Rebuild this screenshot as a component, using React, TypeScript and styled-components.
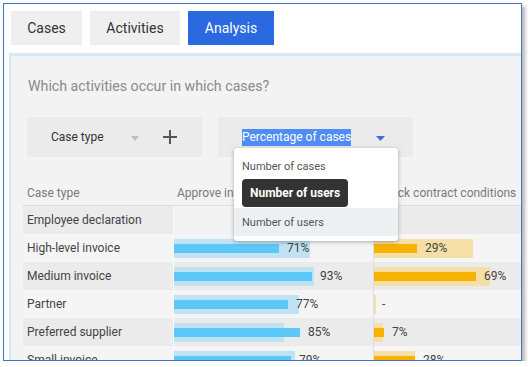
import styled, { createGlobalStyle } from "styled-components";

const GlobalStyle = createGlobalStyle`
  body {
    margin: 0;
    background: #ffffff;
    font-family: Roboto, "Liberation Sans", Arial, sans-serif;
  }
`;

type Measure = { value: number; ref: number; label?: string };
type Row = { name: string; approve?: Measure; check?: Measure };

const SCALE = 1.48;

const rows: Row[] = [
  { name: "Employee declaration" },
  { name: "High-level invoice", approve: { value: 71, ref: 136 }, check: { value: 29, ref: 99 } },
  { name: "Medium invoice", approve: { value: 93, ref: 140 }, check: { value: 69, ref: 116 } },
  { name: "Partner", approve: { value: 77, ref: 125 }, check: { value: 0, ref: 2, label: "-" } },
  { name: "Preferred supplier", approve: { value: 85, ref: 110 }, check: { value: 7, ref: 9 } },
  { name: "Small invoice", approve: { value: 79, ref: 121 }, check: { value: 28, ref: 41 } },
];

const tabs = [
  { label: "Cases", width: 71 },
  { label: "Activities", width: 90 },
  { label: "Analysis", width: 86 },
];

const Caret = ({ color, width = 9 }: { color: string; width?: number }) => (
  <svg width={width} height="5" viewBox={`0 0 ${width} 5`}>
    <path d={`M0 0 L${width} 0 L${width / 2} 5 Z`} fill={color} />
  </svg>
);

const PlusIcon = () => (
  <svg width="14" height="14" viewBox="0 0 14 14">
    <path d="M7 0 V14 M0 7 H14" stroke="#555" strokeWidth="2" />
  </svg>
);

const BarCell = ({ m, tone, empty }: { m?: Measure; tone: "blue" | "orange"; empty?: boolean }) => (
  <Cell $divider={tone === "blue" ? "#fafafa" : "#e0e0e0"} $light={empty}>
    {m && (
      <Stack>
        <RefBar $tone={tone} style={{ width: m.ref }} />
        <Fill>
          <ValueBar $tone={tone} style={{ width: Math.round(m.value * SCALE) }} />
          <Value>{m.label ?? `${m.value}%`}</Value>
        </Fill>
      </Stack>
    )}
  </Cell>
);

export default function App() {
  return (
    <>
      <GlobalStyle />
      <Frame>
        <TabBar>
          {tabs.map((t) => (
            <Tab key={t.label} $width={t.width} $active={t.label === "Analysis"}>
              {t.label}
            </Tab>
          ))}
        </TabBar>
        <Panel>
          <Question>Which activities occur in which cases?</Question>
          <Controls>
            <Control $width={175}>
              <ControlLabel>Case type</ControlLabel>
              <CaretSlot>
                <Caret color="#bdbdbd" width={8} />
              </CaretSlot>
              <PlusIcon />
            </Control>
            <Control $width={195}>
              <Selected>Percentage of cases</Selected>
              <CaretSlot $gap={25}>
                <Caret color="#3d6fd6" />
              </CaretSlot>
              <Menu>
                <MenuItem>Number of cases</MenuItem>
                <MenuItem>Percentage of cases</MenuItem>
                <MenuItem $hover>Number of users</MenuItem>
                <Tooltip>Number of users</Tooltip>
              </Menu>
            </Control>
          </Controls>
          <Table>
            <HeadCell>Case type</HeadCell>
            <HeadCell>Approve invoice</HeadCell>
            <HeadCell>Check contract conditions</HeadCell>
            {rows.map((r, i) => (
              <TableRow key={r.name} $dark={i % 2 === 0}>
                <NameCell>{r.name}</NameCell>
                <BarCell m={r.approve} tone="blue" empty={!r.approve} />
                <BarCell m={r.check} tone="orange" />
              </TableRow>
            ))}
          </Table>
        </Panel>
      </Frame>
    </>
  );
}

const Frame = styled.div`
  box-sizing: border-box;
  margin: 3px 0 0 3px;
  width: 519px;
  height: 358px;
  border: 1px solid #4472c4;
  background: #ffffff;
  overflow: hidden;
  box-shadow: 3px 3px 4px rgba(0, 0, 0, 0.3);
  display: flex;
  flex-direction: column;
`;

const TabBar = styled.div`
  display: flex;
  gap: 8px;
  padding: 7px 0 0 7px;
`;

const Tab = styled.div<{ $active?: boolean; $width: number }>`
  width: ${(p) => p.$width}px;
  height: 34px;
  display: flex;
  align-items: center;
  justify-content: center;
  font-size: 14px;
  color: ${(p) => (p.$active ? "#ffffff" : "#333333")};
  background: ${(p) => (p.$active ? "#2a69e0" : "#efefef")};
`;

const Panel = styled.div`
  flex: 1;
  margin: 8px 0 0 5px;
  background: #f3f3f3;
  border-top: 3px solid #d3e8f8;
  border-left: 2px solid #d3e8f8;
`;

const Question = styled.div`
  padding: 20px 0 0 17px;
  font-size: 14.2px;
  line-height: 20px;
  color: #8a8a8a;
`;

const Controls = styled.div`
  display: flex;
  gap: 16px;
  margin: 21px 0 0 16px;
`;

const Control = styled.div<{ $width: number }>`
  position: relative;
  box-sizing: border-box;
  width: ${(p) => p.$width}px;
  height: 40px;
  padding-left: 24px;
  display: flex;
  align-items: center;
  background: #ebebeb;
  border-radius: 2px;
  font-size: 12px;
`;

const ControlLabel = styled.span`
  color: #333333;
`;

const CaretSlot = styled.span<{ $gap?: number }>`
  display: flex;
  margin: 2px ${(p) => (p.$gap ? 0 : 24)}px 0 ${(p) => p.$gap ?? 27}px;
`;

const Selected = styled.span`
  background: #4f8cf6;
  color: #ffffff;
  font-size: 12px;
  line-height: 17px;
`;

const Menu = styled.div`
  position: absolute;
  left: 16px;
  top: 31px;
  width: 164px;
  padding: 4px 0 5px;
  background: #ffffff;
  border-radius: 3px;
  box-shadow: 0 1px 4px rgba(0, 0, 0, 0.3);
  z-index: 2;
`;

const MenuItem = styled.div<{ $hover?: boolean }>`
  height: 28px;
  padding-left: 8px;
  display: flex;
  align-items: center;
  font-size: 11px;
  color: #555555;
  background: ${(p) => (p.$hover ? "#edf0f3" : "transparent")};
`;

const Tooltip = styled.div`
  position: absolute;
  left: 8px;
  top: 31px;
  height: 28px;
  padding: 0 8px;
  display: flex;
  align-items: center;
  background: #333333;
  border-radius: 4px;
  color: #ffffff;
  font-size: 12px;
  font-weight: bold;
`;

const Table = styled.div`
  display: grid;
  grid-template-columns: 150px 200px 1fr;
  margin: 23px 0 0 12px;
  font-size: 12px;
`;

const HeadCell = styled.div`
  height: 25px;
  padding-left: 4px;
  display: flex;
  align-items: center;
  border-bottom: 1px solid #dddddd;
  color: #7a7a7a;
  white-space: nowrap;
  overflow: hidden;
`;

const TableRow = styled.div<{ $dark: boolean }>`
  display: contents;
  --row-bg: ${(p) => (p.$dark ? "#ebebeb" : "#f5f5f5")};
`;

const NameCell = styled.div`
  height: 28px;
  padding-left: 4px;
  display: flex;
  align-items: center;
  background: var(--row-bg);
  color: #444444;
`;

const Cell = styled.div<{ $divider: string; $light?: boolean }>`
  height: 28px;
  border-left: 1px solid ${(p) => p.$divider};
  background: ${(p) => (p.$light ? "#f3f3f3" : "var(--row-bg)")};
`;

const Stack = styled.div`
  display: grid;
  height: 100%;
  grid-template-areas: "stack";
`;

const RefBar = styled.div<{ $tone: "blue" | "orange" }>`
  grid-area: stack;
  align-self: center;
  height: 19px;
  background: ${(p) => (p.$tone === "blue" ? "#bfe3f3" : "#f5dfa6")};
`;

const Fill = styled.div`
  grid-area: stack;
  display: flex;
  align-items: center;
  gap: 8px;
`;

const ValueBar = styled.div<{ $tone: "blue" | "orange" }>`
  height: 9px;
  margin-top: 1px;
  background: ${(p) => (p.$tone === "blue" ? "#5bc8f7" : "#f7b200")};
`;

const Value = styled.span`
  color: #444444;
  position: relative;
`;
